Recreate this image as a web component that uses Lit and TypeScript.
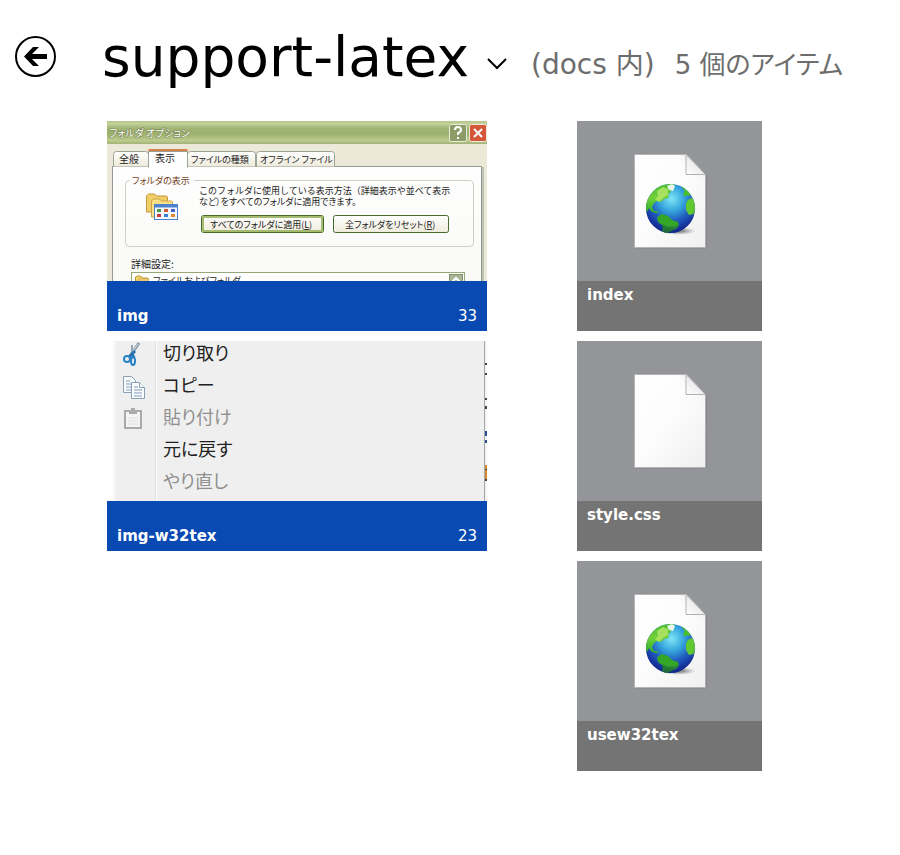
import { LitElement, html, svg, css, nothing } from "lit";
import { customElement, property } from "lit/decorators.js";

const GLOBE = svg`
  <ellipse cx="101" cy="110" rx="18" ry="4" fill="url(#cast)" />
  <circle cx="93.5" cy="87.5" r="24.5" fill="url(#sea)" />
  <g clip-path="url(#ball)">
    <path fill="url(#land)" d="M67 88L69 78 75 69 84 63 93 62 98 64 95 69 91 74 92 77 87 78 84 81 80 80 77 82 75 86 77 90 80 90 81 92 78 92 74 90 72 87 70 91z" />
    <path fill="#b6e766" opacity=".8" d="M80 70l6 -4 5 2 0 6 -5 3 -4 4 -4 -3 3 -3z" />
    <path fill="#e9f6e9" d="M90 65l5 -2 3 2 -2 5 -4 -1z" />
    <path fill="#35a728" d="M80 96L85 93 91 95 95 99 101 101 102 104 99 108 94 110 89 113 85 110 86 105 81 101z" />
    <path fill="#1f7d24" opacity=".5" d="M85 103l6 3 9 0 -6 5 -7 1z" />
    <path fill="#4cbf2d" d="M103 64L109 67 114 73 112 75 109 74 108 76 106 73 108 70z" />
    <path fill="#62c832" d="M110 80L114 77 118 79 120 86 117 93 112 94 109 89 109 83z" />
    <circle cx="93.5" cy="87.5" r="24.5" fill="url(#shade)" />
  </g>`;

@customElement("document-icon")
export class DocumentIcon extends LitElement {
  @property({ type: Boolean }) web = false;

  static styles = css`
    :host { display: block; }
    .art { display: block; width: 100%; height: 100%; }
  `;

  render() {
    return html`
      <svg class="art" viewBox="0 0 185 160" aria-hidden="true">
        <defs>
          <linearGradient id="paper" x1="0" y1="0" x2="1" y2="1">
            <stop offset="0" stop-color="#fff" />
            <stop offset=".5" stop-color="#fcfcfc" />
            <stop offset="1" stop-color="#efefef" />
          </linearGradient>
          <linearGradient id="fold" x1="0" y1="1" x2=".7" y2=".3">
            <stop offset="0" stop-color="#fff" />
            <stop offset="1" stop-color="#e4e4e4" />
          </linearGradient>
          <linearGradient id="crease" x1="0" y1="1" x2=".8" y2="0">
            <stop offset=".4" stop-color="#ccc" stop-opacity="0" />
            <stop offset="1" stop-color="#c4c4c4" stop-opacity=".7" />
          </linearGradient>
          <radialGradient id="sea" cx=".52" cy=".3" r=".72">
            <stop offset="0" stop-color="#7fe6f5" />
            <stop offset=".35" stop-color="#35a5dd" />
            <stop offset=".65" stop-color="#1f55b8" />
            <stop offset="1" stop-color="#16259b" />
          </radialGradient>
          <linearGradient id="land" x1="0" y1="0" x2="0" y2="1">
            <stop offset="0" stop-color="#4dbd35" />
            <stop offset=".5" stop-color="#6fcf3a" />
            <stop offset="1" stop-color="#2fae28" />
          </linearGradient>
          <radialGradient id="shade" cx=".5" cy=".35" r=".68">
            <stop offset=".7" stop-color="#0a1a70" stop-opacity="0" />
            <stop offset="1" stop-color="#0a1a70" stop-opacity=".5" />
          </radialGradient>
          <radialGradient id="cast">
            <stop offset=".3" stop-color="#777" stop-opacity=".8" />
            <stop offset="1" stop-color="#999" stop-opacity="0" />
          </radialGradient>
          <clipPath id="ball"><circle cx="93.5" cy="87.5" r="24.5" /></clipPath>
        </defs>
        <path d="M58 34H110L130 54V127.5H58z" fill="#77787a" opacity=".55" />
        <path d="M57.5 33.5H109.5L128.5 53.5V126.5H57.5z" fill="url(#paper)" stroke="#b4b4b4" />
        <path d="M102 34H109V54H128V62L122 58 106 56z" fill="url(#crease)" opacity=".5" />
        <path d="M109 33.5V53.5H128.5z" fill="url(#fold)" stroke="#b2b2b2" />
        ${this.web ? GLOBE : nothing}
      </svg>
    `;
  }
}

@customElement("options-thumb")
export class OptionsThumb extends LitElement {
  static styles = css`
    :host { display: block; }
    .art { display: block; width: 100%; height: 100%; }
    .label {
      font-family: "Noto Sans CJK JP", sans-serif;
      font-size: 10px;
      font-feature-settings: "palt";
      fill: #222;
    }
    .small { font-size: 9px; }
    .full { font-feature-settings: normal; }
    .heading { fill: #75421d; }
    .caption { fill: #fff; stroke: #6d7c48; stroke-width: 1; paint-order: stroke; }
  `;

  render() {
    const dots = [0, 1, 2, 3, 4, 5];
    const inks = ["#4a9a4a", "#d65a2e", "#3f62c8", "#c83a3a", "#3b7fd0", "#e0862e"];
    return html`
      <svg class="art" viewBox="0 0 380 160" aria-hidden="true">
        <defs>
          <linearGradient id="bar" x1="0" y1="0" x2="0" y2="1">
            <stop offset="0" stop-color="#b5c58a" />
            <stop offset=".12" stop-color="#c3d19c" />
            <stop offset=".3" stop-color="#a3b576" />
            <stop offset=".55" stop-color="#9cb06c" />
            <stop offset=".85" stop-color="#bccb8f" />
            <stop offset="1" stop-color="#a3b178" />
          </linearGradient>
          <linearGradient id="face" x1="0" y1="0" x2="0" y2="1">
            <stop offset="0" stop-color="#fff" />
            <stop offset="1" stop-color="#eeebdc" />
          </linearGradient>
          <linearGradient id="pane" x1="0" y1="0" x2="0" y2="1">
            <stop offset="0" stop-color="#fefefe" />
            <stop offset="1" stop-color="#f8f8f5" />
          </linearGradient>
        </defs>
        <rect width="380" height="160" fill="#ece9d8" />
        <rect width="380" height="23" fill="url(#bar)" />
        <text class="label caption" x="2" y="16">フォルダ オプション</text>
        <rect x="342.5" y="3.5" width="17" height="17" rx="2" fill="#8b9c68" stroke="#e8eed9" />
        <path d="M348 9q0 -3 3 -3t3 3q0 2 -3 3v2M351 16v2" fill="none" stroke="#fff" stroke-width="2" />
        <rect x="362.5" y="3.5" width="17" height="17" rx="2" fill="#d4573a" stroke="#f2e5d9" />
        <path d="M367 8l8 8M375 8l-8 8" stroke="#fff" stroke-width="2" />

        <rect x="5.5" y="45.5" width="369" height="130" fill="url(#pane)" stroke="#939c91" />
        <path d="M376 46v114" stroke="#bcc3b2" stroke-width="2" />
        <path d="M6.5 45.5v-12q0 -3 3 -3h29q3 0 3 3v12" fill="url(#face)" stroke="#9aa396" />
        <path d="M80.5 45.5v-12q0 -3 3 -3h62q3 0 3 3v12" fill="url(#face)" stroke="#9aa396" />
        <path d="M149.5 45.5v-12q0 -3 3 -3h72q3 0 3 3v12" fill="url(#face)" stroke="#9aa396" />
        <path d="M41.5 46.5v-16h39v16" fill="#fefefe" stroke="#9aa396" />
        <path d="M42 46h38" stroke="#fefefe" stroke-width="2" />
        <path d="M41 30q0 -2 2 -2h36q2 0 2 2z" fill="#d98048" />
        <text class="label" x="12" y="42">全般</text>
        <text class="label" x="48" y="41">表示</text>
        <text class="label small" x="84" y="42">ファイルの種類</text>
        <text class="label small" x="153" y="42">オフライン ファイル</text>

        <rect x="18.5" y="59.5" width="348" height="66" rx="4" fill="none" stroke="#cfd0c3" />
        <rect x="23" y="54" width="64" height="11" fill="#fdfdfd" />
        <text class="label small heading" x="25" y="63">フォルダの表示</text>
        <path d="M39.5 91V75l2 -2h6l2 2h10l1 1v15z" fill="#f0cf68" stroke="#c0993a" />
        <path d="M44.5 96V80l2 -2h6l2 2h10l1 1v15z" fill="#fadf85" stroke="#c9a245" />
        <rect x="47.5" y="83.5" width="23" height="15" fill="#f3f7ff" stroke="#4d82cf" />
        <path d="M47 85h24" stroke="#4d82cf" stroke-width="3" />
        ${dots.map(
          (n) => svg`<rect x=${50 + (n % 3) * 7} y=${88 + Math.floor(n / 3) * 5} width="4" height="3" fill=${inks[n]} />`
        )}
        <text class="label small full" x="92" y="73">このフォルダに使用している表示方法（詳細表示や並べて表示</text>
        <text class="label small" x="92" y="84">など）をすべてのフォルダに適用できます。</text>
        <rect x="94.5" y="94.5" width="122" height="17" rx="2" fill="url(#face)" stroke="#466b2d" />
        <rect x="96" y="96" width="119" height="14" fill="none" stroke="#a5bc70" stroke-width="2" />
        <text class="label small" x="103" y="107">すべてのフォルダに適用(<tspan text-decoration="underline">L</tspan>)</text>
        <rect x="226.5" y="94.5" width="115" height="17" rx="2" fill="url(#face)" stroke="#466b2d" />
        <text class="label small" x="238" y="107">全フォルダをリセット(<tspan text-decoration="underline">R</tspan>)</text>

        <text class="label" x="24" y="147">詳細設定:</text>
        <rect x="24.5" y="151.5" width="333" height="20" fill="#fff" stroke="#96a878" />
        <path d="M28.5 160v-4l2 -1h3l2 2h5v3" fill="#f4d36b" stroke="#b8912e" />
        <path d="M30 160l2 -2h10l-1 2z" fill="#fff0a8" stroke="#c9a245" />
        <text class="label small" x="46" y="163">ファイルおよびフォルダ</text>
        <rect x="342.5" y="153.5" width="13" height="13" fill="#a9b796" stroke="#7e9164" />
        <path d="M345 161l4 -4 4 4" fill="none" stroke="#fff" stroke-width="2" />
      </svg>
    `;
  }
}

@customElement("menu-thumb")
export class MenuThumb extends LitElement {
  static styles = css`
    :host { display: block; }
    .art { display: block; width: 100%; height: 100%; }
    .item {
      font-family: "Noto Sans CJK JP", sans-serif;
      font-size: 18px;
      font-feature-settings: "palt";
      fill: #222;
    }
    .off { fill: #8f8f8f; }
  `;

  render() {
    return html`
      <svg class="art" viewBox="0 0 380 160" aria-hidden="true">
        <defs>
          <linearGradient id="edge">
            <stop offset=".5" stop-color="#fff" />
            <stop offset="1" stop-color="#efefef" />
          </linearGradient>
        </defs>
        <rect width="380" height="160" fill="#efefef" />
        <rect width="10" height="160" fill="url(#edge)" />
        <path d="M48.5 0v160" stroke="#dfe1e2" />
        <path d="M49.5 0v160" stroke="#fafafa" />

        <path d="M32 2L23 15" stroke="#8199ab" stroke-width="3" />
        <path d="M31 3L24 13" stroke="#d3dfe8" />
        <path d="M25 4V15" stroke="#91a7b7" stroke-width="2" />
        <path d="M28 10L22 16M25 13l2 4" stroke="#2a72ae" stroke-width="3" />
        <ellipse cx="20" cy="18" rx="3" ry="3" fill="none" stroke="#2683c6" stroke-width="2" />
        <ellipse cx="26" cy="20" rx="2" ry="4" fill="none" stroke="#2683c6" stroke-width="2" />

        <g fill="#fafcfe" stroke="#8ba0b5">
          <path d="M16.5 35.5h8l4 4v12h-12z" />
          <path d="M24.5 41.5h8l5 5v11h-13z" />
          <path d="M32.5 41.5v5h5" />
        </g>
        <path d="M19 40h4M19 43h5M19 46h5M19 49h5M27 46h4M27 49h8M27 52h8M27 55h8" stroke="#7d9cbf" />

        <rect x="18" y="70" width="16" height="17" fill="#f4f4f4" stroke="#aaa" stroke-width="2" />
        <path d="M22 69h8v4h-8zM24 67h4v3h-4z" fill="#aaa" />
        <path d="M21 77h10M21 80h10M21 83h10" stroke="#e0e0e0" />

        <text class="item" x="56" y="19">切り取り</text>
        <text class="item" x="56" y="51">コピー</text>
        <text class="item off" x="56" y="83">貼り付け</text>
        <text class="item" x="56" y="115">元に戻す</text>
        <text class="item off" x="56" y="147">やり直し</text>

        <rect x="377" width="1" height="160" fill="#a6a6a6" />
        <rect x="378" width="2" height="160" fill="#f4f4f4" />
        <path d="M379 22v2M379 32v2M379 57v2M379 65v3" stroke="#444" stroke-width="2" />
        <path d="M379 90v5M379 99v3" stroke="#27518c" stroke-width="2" />
        <path d="M379 124v14" stroke="#d68a2c" stroke-width="2" />
        <path d="M379 128v1M379 138v2" stroke="#444" stroke-width="2" />
      </svg>
    `;
  }
}

@customElement("app-root")
export class AppRoot extends LitElement {
  static styles = css`
    :host {
      display: block;
      min-height: 100vh;
      background: #fff;
      color: #000;
      font-family: "DejaVu Sans", "Noto Sans CJK JP", sans-serif;
    }
    .header {
      display: flex;
      align-items: center;
      height: 113px;
      padding-left: 15px;
    }
    .back, .menu {
      display: block;
      flex: none;
      padding: 0;
      border: 0;
      background: none;
      color: inherit;
    }
    .back { width: 41px; height: 41px; margin-right: 46px; }
    .menu { width: 20px; height: 12px; margin: 14px 24px 0 18px; }
    .glyph { display: block; width: 100%; height: 100%; }
    .title { margin: 0; font-size: 55px; line-height: 64px; font-weight: 400; }
    .where {
      display: flex;
      align-items: baseline;
      gap: 20px;
      margin: 16px 0 0;
      font-size: 28px;
      line-height: 32px;
      color: #6d6d6d;
      white-space: nowrap;
      font-feature-settings: "palt";
    }
    .total { font-size: 26px; }
    .groups {
      display: flex;
      align-items: flex-start;
      gap: 90px;
      padding: 8px 20px 40px 107px;
    }
    .list {
      display: grid;
      gap: 10px;
      margin: 0;
      padding: 0;
      list-style: none;
    }
    .tile {
      display: block;
      color: #fff;
      font-size: 15px;
      line-height: 18px;
      text-decoration: none;
    }
    .folder { width: 380px; }
    .file { width: 185px; background: #949599; }
    .picture { height: 160px; }
    .caption {
      display: flex;
      justify-content: space-between;
      box-sizing: border-box;
      height: 50px;
      padding: 5px 10px;
    }
    .folder .caption { align-items: flex-end; padding: 6px 10px; background: #0949b2; }
    .file .caption { background: #747474; }
    .name { font-weight: 700; }
  `;

  private folders = [
    { name: "img", count: 33, art: html`<options-thumb class="picture"></options-thumb>` },
    { name: "img-w32tex", count: 23, art: html`<menu-thumb class="picture"></menu-thumb>` },
  ];

  private files = [
    { name: "index", web: true },
    { name: "style.css", web: false },
    { name: "usew32tex", web: true },
  ];

  render() {
    return html`
      <header class="header">
        <button class="back" aria-label="戻る">
          <svg class="glyph" viewBox="0 0 41 41">
            <circle cx="20.5" cy="20.5" r="19.5" fill="none" stroke="currentColor" stroke-width="2" />
            <path d="M9 20.5L18 11h6l-7 7h15v5H17l7 7h-6z" fill="currentColor" />
          </svg>
        </button>
        <h1 class="title">support-latex</h1>
        <button class="menu" aria-label="場所を選択">
          <svg class="glyph" viewBox="0 0 20 12">
            <path d="M1 1l9 9 9 -9" fill="none" stroke="currentColor" stroke-width="2" />
          </svg>
        </button>
        <p class="where"><span>(docs 内)</span><span class="total">5 個のアイテム</span></p>
      </header>
      <main class="groups">
        <ul class="list">
          ${this.folders.map(
            (f) => html`<li>
              <a class="tile folder" href="#${f.name}">
                ${f.art}
                <div class="caption"><span class="name">${f.name}</span><span>${f.count}</span></div>
              </a>
            </li>`
          )}
        </ul>
        <ul class="list">
          ${this.files.map(
            (f) => html`<li>
              <a class="tile file" href="#${f.name}">
                <document-icon class="picture" ?web=${f.web}></document-icon>
                <div class="caption"><span class="name">${f.name}</span></div>
              </a>
            </li>`
          )}
        </ul>
      </main>
    `;
  }
}
